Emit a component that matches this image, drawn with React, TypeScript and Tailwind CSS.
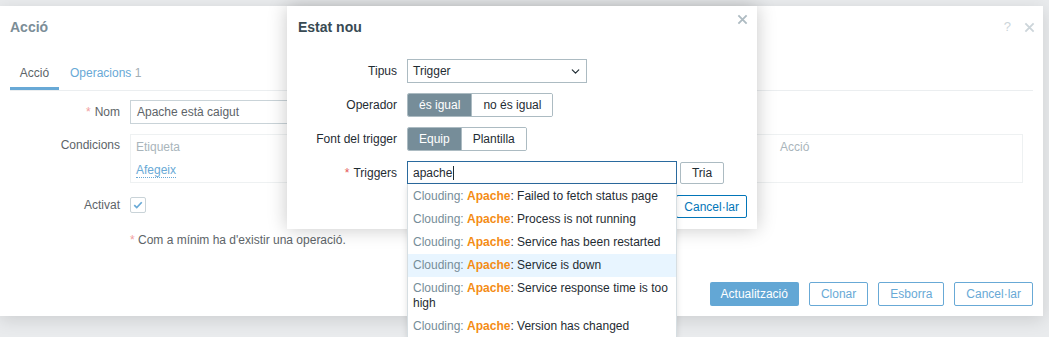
import { ChevronDown } from "lucide-react";

const suggestions = [
  { rest: "Failed to fetch status page" },
  { rest: "Process is not running" },
  { rest: "Service has been restarted" },
  { rest: "Service is down", active: true },
  { rest: "Service response time is too", more: "high" },
  { rest: "Version has changed" },
];

function CloseIcon({ className }: { className?: string }) {
  return (
    <svg viewBox="0 0 12 12" className={className} fill="none" stroke="currentColor" strokeWidth="2">
      <path d="M1.5 1.5l9 9M10.5 1.5l-9 9" />
    </svg>
  );
}

function BackDialog() {
  return (
    <div className="mt-[6px] flex h-[310px] w-[1043px] flex-col bg-white shadow-[0_4px_16px_rgba(0,0,0,0.12)]">
      <div className="flex items-start justify-between pl-[10px] pr-[8px] pt-[13px]">
        <h2 className="text-[14px] font-bold leading-[17px] text-[#7b8d97]">Acció</h2>
        <div className="mt-[1px] flex items-center gap-[13px] text-[#ccd5da]">
          <span className="text-[13px] leading-[14px]">?</span>
          <CloseIcon className="h-[11px] w-[11px]" />
        </div>
      </div>

      <div className="mx-[10px] mt-[26px] flex border-b border-[#ebeef0] leading-[14px]">
        <div className="w-[49px] border-b-[3px] border-[#68a9d6] pb-[7px] pt-[4px] text-center text-[#5d6468]">Acció</div>
        <div className="pb-[10px] pl-[11px] pt-[4px] text-[#68a9d6]">
          Operacions <span className="text-[#a3aeb4]">1</span>
        </div>
      </div>

      <div className="grid grid-cols-[110px_1fr] gap-x-[10px] pl-[10px] pt-[9px] leading-[14px]">
        <div className="flex h-[24px] items-center justify-end text-[#5d6468]">
          <span className="mr-[4px] text-[#f2a0a0]">*</span>Nom
        </div>
        <div className="flex h-[24px] w-[453px] items-center border border-[#c9d3d8] px-[6px] text-[#5d6468]">
          Apache està caigut
        </div>

        <div className="mt-[10px] pt-[4px] text-right text-[#5d6468]">Condicions</div>
        <div className="mt-[10px] flex h-[49px] w-[893px] border border-[#eef1f2] px-[5px] pt-[5px]">
          <div className="w-[644px]">
            <div className="text-[#a9b5bb]">Etiqueta</div>
            <div className="mt-[9px] inline-block border-b border-dotted border-[#68a9d6] text-[#68a9d6]">Afegeix</div>
          </div>
          <div className="text-[#a9b5bb]">Acció</div>
        </div>

        <div className="mt-[14px] flex h-[16px] items-center justify-end text-[#5d6468]">Activat</div>
        <div className="mt-[14px] flex h-[16px] w-[16px] items-center justify-center rounded-[2px] border border-[#c9d3d8]">
          <svg viewBox="0 0 12 12" className="h-[10px] w-[10px]" fill="none" stroke="#68a9d6" strokeWidth="2">
            <path d="M1.5 6.2l3 3 6-6.5" />
          </svg>
        </div>

        <div />
        <div className="mt-[20px] text-[#5d6468]">
          <span className="text-[#f2a0a0]">*</span> Com a mínim ha d'existir una operació.
        </div>
      </div>

      <div className="mt-auto flex justify-end gap-[10px] pb-[10px] pr-[10px] leading-[14px]">
        <button className="h-[24px] rounded-[2px] bg-[#63a7d5] px-[11px] text-white">Actualització</button>
        <button className="h-[24px] rounded-[2px] border border-[#68a9d6] px-[11px] text-[#68a9d6]">Clonar</button>
        <button className="h-[24px] rounded-[2px] border border-[#68a9d6] px-[11px] text-[#68a9d6]">Esborra</button>
        <button className="h-[24px] rounded-[2px] border border-[#68a9d6] px-[11px] text-[#68a9d6]">Cancel·lar</button>
      </div>
    </div>
  );
}

function Segmented({ options }: { options: string[] }) {
  return (
    <div className="flex h-[24px] overflow-hidden rounded-[2px] border border-[#acbbc2]">
      {options.map((o, i) => (
        <div
          key={o}
          className={
            i === 0
              ? "flex items-center bg-[#768d99] px-[11px] text-white"
              : "flex items-center border-l border-[#acbbc2] bg-white px-[11px] text-[#1f2c33]"
          }
        >
          {o}
        </div>
      ))}
    </div>
  );
}

function FrontDialog() {
  return (
    <div className="absolute left-[287px] top-[6px] flex h-[223px] w-[470px] flex-col bg-white shadow-[0_0_18px_rgba(0,0,0,0.22)]">
      <div className="px-[11px] pt-[13px]">
        <h2 className="text-[14px] font-bold leading-[17px] text-[#384a53]">Estat nou</h2>
      </div>
      <CloseIcon className="absolute right-[9px] top-[8px] h-[11px] w-[11px] text-[#aebbc2]" />

      <div className="mt-[23px] grid grid-cols-[99px_1fr] gap-x-[10px] gap-y-[10px] pl-[11px] leading-[14px] text-[#1f2c33]">
        <div className="flex h-[24px] items-center justify-end">Tipus</div>
        <div className="flex h-[24px] w-[180px] items-center justify-between border border-[#acbbc2] pl-[5px] pr-[4px]">
          Trigger
          <ChevronDown className="h-[13px] w-[13px]" strokeWidth={2.2} />
        </div>

        <div className="flex h-[24px] items-center justify-end">Operador</div>
        <div className="flex">
          <Segmented options={["és igual", "no és igual"]} />
        </div>

        <div className="flex h-[24px] items-center justify-end">Font del trigger</div>
        <div className="flex">
          <Segmented options={["Equip", "Plantilla"]} />
        </div>

        <div className="flex h-[23px] items-center justify-end">
          <span className="mr-[4px] text-[#e45959]">*</span>Triggers
        </div>
        <div className="flex items-start gap-[3px]">
          <div className="flex h-[23px] w-[270px] items-center border border-[#2a6a9e] pl-[5px]">
            apache<span className="ml-[1px] h-[14px] w-px bg-[#1f2c33]" />
          </div>
          <button className="mt-[1px] h-[22px] w-[44px] rounded-[2px] border border-[#acbbc2]">Tria</button>
        </div>
      </div>

      <div className="mt-auto flex justify-end pb-[11px] pr-[10px] leading-[14px]">
        <button className="h-[23px] rounded-[2px] border border-[#0275b8] px-[7px] text-[#0275b8]">Cancel·lar</button>
      </div>
    </div>
  );
}

function Suggestions() {
  return (
    <ul className="absolute left-[407px] top-[184px] w-[270px] border border-t-0 border-[#d6dee2] bg-white pt-px leading-[15px] text-[#1f2c33] shadow-[0_2px_6px_rgba(0,0,0,0.12)]">
      {suggestions.map((s) => (
        <li
          key={s.rest}
          className={s.active ? "bg-[#e8f5ff] px-[5px] py-[4px]" : "px-[5px] py-[4px]"}
        >
          <span className="text-[#768d99]">Clouding: </span>
          <b className="text-[#f48c15]">Apache</b>: {s.rest}
          {s.more && <div>{s.more}</div>}
        </li>
      ))}
    </ul>
  );
}

export default function App() {
  return (
    <div className="relative h-[337px] w-[1049px] overflow-hidden bg-[#e9ebed] font-['Liberation_Sans',Arial,sans-serif] text-[12px]">
      <BackDialog />
      <FrontDialog />
      <Suggestions />
    </div>
  );
}
